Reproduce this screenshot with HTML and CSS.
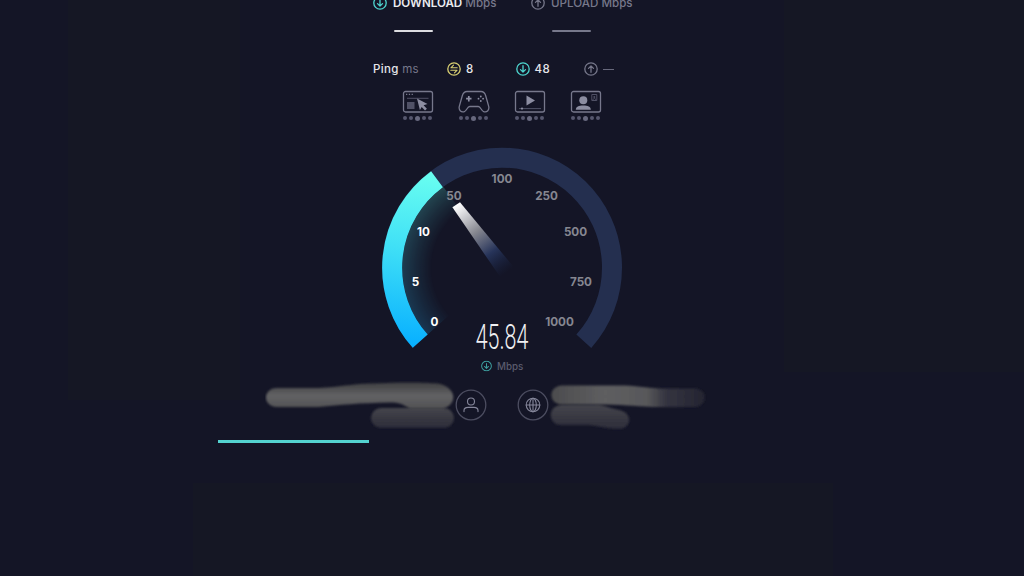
FILE: index.html
```html
<!DOCTYPE html>
<html lang="en">
<head>
    <meta charset="UTF-8">
    <meta name="viewport" content="width=device-width, initial-scale=1.0">
    <title>Speed Test</title>
    <link rel="stylesheet" href="styles.css">
</head>
<body>
    <!-- Shared icons -->
    <svg class="icon-defs" width="0" height="0">
        <symbol id="icon-down" viewBox="0 0 14 14">
            <circle cx="7" cy="7" r="6.2"/>
            <path d="M7 3.7v6.3M4.5 7.6L7 10.1l2.5-2.5"/>
        </symbol>
        <symbol id="icon-up" viewBox="0 0 14 14">
            <circle cx="7" cy="7" r="6.2"/>
            <path d="M7 10.3V4M4.5 6.4L7 3.9l2.5 2.5"/>
        </symbol>
        <symbol id="icon-idle" viewBox="0 0 14 14">
            <circle cx="7" cy="7" r="6.2"/>
            <path stroke-width="1.1" d="M10.2 5.8H3.9L6.5 3.2M3.8 8.2h6.3L7.5 10.800"/>
        </symbol>
    </svg>

    <div class="page">
        <div class="side side-left"></div>

        <main class="test">
            <div class="results">
                <div class="result">
                    <div class="result-label"><svg class="icon teal"><use href="#icon-down"/></svg><span><b>DOWNLOAD</b> Mbps</span></div>
                    <div class="result-line"></div>
                </div>
                <div class="result upload">
                    <div class="result-label"><svg class="icon"><use href="#icon-up"/></svg><span>UPLOAD Mbps</span></div>
                    <div class="result-line"></div>
                </div>
            </div>

            <div class="ping">
                <span class="ping-title">Ping <em>ms</em></span>
                <span class="ping-item idle"><svg class="icon yellow"><use href="#icon-idle"/></svg>8</span>
                <span class="ping-item down"><svg class="icon teal"><use href="#icon-down"/></svg>48</span>
                <span class="ping-item up"><svg class="icon"><use href="#icon-up"/></svg><i class="dash"></i></span>
            </div>

            <div class="activities">
                <div class="activity">
                    <svg width="32" height="24" viewBox="0 0 32 24">
                        <rect class="frame" x="1.5" y="1.5" width="29" height="20.500" rx="2"/>
                        <path class="dots" d="M4 4.400h1.300M6.800 4.400h1.300M9.600 4.400h1.300"/>
                        <path class="dim-line" d="M5 8.300h21.500"/>
                        <rect class="dim" x="5" y="12" width="7.500" height="7"/>
                        <path class="fill" d="M15 8.500l10.500 5.500-3.900 1.300 3.300 3.400-1.900 1.800-3.300-3.600-1.800 3.100z"/>
                    </svg>
                    <div class="rating"><i></i><i></i><i></i><i></i><i></i></div>
                </div>
                <div class="activity">
                    <svg width="32" height="24" viewBox="0 0 32 24">
                        <path class="frame" d="M9 1.500h14c3 0 4 1.700 4.700 4.200l3 10.600c.9 3.800-1.700 6.200-4.700 5.500-2.700-.6-3.200-5.300-5.700-5.300h-8.600c-2.500 0-3 4.700-5.700 5.300-3 .7-5.600-1.700-4.700-5.500l3-10.600C5 3.200 6 1.500 9 1.500z"/>
                        <path class="plus" d="M10.800 6v5.400M8.100 8.700h5.400"/>
                        <g class="fill">
                            <circle cx="22.800" cy="6.500" r=".9"/><circle cx="22.800" cy="11" r=".9"/>
                            <circle cx="20.500" cy="8.700" r=".9"/><circle cx="25.100" cy="8.700" r=".9"/>
                        </g>
                    </svg>
                    <div class="rating"><i></i><i></i><i></i><i></i><i></i></div>
                </div>
                <div class="activity">
                    <svg width="32" height="24" viewBox="0 0 32 24">
                        <rect class="frame" x="1.500" y="1.500" width="29" height="20.500" rx="2"/>
                        <path class="fill" d="M12.500 5.500v10l8.500-5z"/>
                        <path class="dim-line" d="M5 18.600h22"/>
                        <circle class="fill" cx="8" cy="18.600" r="1.100"/>
                    </svg>
                    <div class="rating"><i></i><i></i><i></i><i></i><i></i></div>
                </div>
                <div class="activity">
                    <svg width="32" height="24" viewBox="0 0 32 24">
                        <rect class="frame" x="1.500" y="1.500" width="29" height="20.500" rx="2"/>
                        <circle class="fill" cx="13.300" cy="10.300" r="4"/>
                        <path class="fill" d="M5.800 19.800c0-3.300 3-4.300 7.500-4.300s7.500 1 7.500 4.300z"/>
                        <path class="dim-line" d="M21.800 4.500h5v6h-5zM23 10c0-2 2.800-2 2.800 0"/>
                        <circle class="dim" cx="24.300" cy="7" r="1"/>
                    </svg>
                    <div class="rating"><i></i><i></i><i></i><i></i><i></i></div>
                </div>
            </div>

            <!-- Speed gauge -->
            <svg class="gauge" width="260" height="234" viewBox="372 144 260 234">
                <defs>
                    <linearGradient id="arc" gradientUnits="userSpaceOnUse" x1="438" y1="172" x2="418" y2="346">
                        <stop offset="0" stop-color="#6afff0"/>
                        <stop offset=".45" stop-color="#40e0f6"/>
                        <stop offset="1" stop-color="#08b0ff"/>
                    </linearGradient>
                    <linearGradient id="glow-color" gradientUnits="userSpaceOnUse" x1="440" y1="187" x2="428" y2="335">
                        <stop offset="0" stop-color="#4ab8b0"/>
                        <stop offset="1" stop-color="#2080b8"/>
                    </linearGradient>
                    <radialGradient id="glow-fade" gradientUnits="userSpaceOnUse" cx="502" cy="268" r="100">
                        <stop offset=".7" stop-color="#fff" stop-opacity="0"/>
                        <stop offset=".86" stop-color="#fff" stop-opacity=".15"/>
                        <stop offset="1" stop-color="#fff" stop-opacity=".3"/>
                    </radialGradient>
                    <mask id="glow-mask" maskUnits="userSpaceOnUse" x="372" y="144" width="260" height="234">
                        <rect x="372" y="144" width="260" height="234" fill="url(#glow-fade)"/>
                    </mask>
                    <linearGradient id="needle" gradientUnits="userSpaceOnUse" x1="456" y1="205" x2="506" y2="273">
                        <stop offset="0" stop-color="#fff"/>
                        <stop offset=".1" stop-color="#e4e4e7"/>
                        <stop offset=".4" stop-color="#85868f"/>
                        <stop offset=".7" stop-color="#27345a"/>
                        <stop offset="1" stop-color="#182444" stop-opacity="0"/>
                    </linearGradient>
                </defs>
                <path class="track" d="M420.200 341.200A110 110 0 1 1 583.800 341.200"/>
                <path fill="url(#glow-color)" mask="url(#glow-mask)" d="M427.600 334.500A100 100 0 0 1 443.500 187L461 211A70 70 0 0 0 450 314.500z"/>
                <path class="value" d="M420.200 341.200A110 110 0 0 1 437 179.200"/>
                <path fill="url(#needle)" d="M452.400 207.300L460 202.300L514.500 268L500.500 277.500z"/>
                <g class="ticks">
                    <text class="on" x="434.500" y="325.500">0</text>
                    <text class="on" x="415.500" y="285.500">5</text>
                    <text class="on" x="423.500" y="235.500">10</text>
                    <text x="454" y="199.700">50</text>
                    <text x="502" y="183">100</text>
                    <text x="546.500" y="199.700">250</text>
                    <text x="575.500" y="235.500">500</text>
                    <text x="581" y="285.700">750</text>
                    <text x="559.500" y="325.500">1000</text>
                </g>
                <text class="speed" transform="translate(502 349.300) scale(.615 1)">45.84</text>
                <svg class="icon teal unit-icon" x="481" y="360.500" width="11" height="11"><use href="#icon-down" width="11" height="11"/></svg>
                <text class="unit" x="497" y="369.700">Mbps</text>
            </svg>

            <!-- Connection details, names smudged out -->
            <div class="connection">
                <svg width="190" height="52" viewBox="265 379 190 52">
                    <defs>
                        <filter id="soft" x="-10%" y="-20%" width="120%" height="140%"><feGaussianBlur stdDeviation="1.2"/></filter>
                        <linearGradient id="smudge" x2="0" y2="1">
                            <stop offset="0" stop-color="#3e3e41"/>
                            <stop offset=".5" stop-color="#626264"/>
                            <stop offset="1" stop-color="#525254"/>
                        </linearGradient>
                        <linearGradient id="smudge-dim" x2="0" y2="1">
                            <stop offset="0" stop-color="#45454b"/>
                            <stop offset="1" stop-color="#2c2c39"/>
                        </linearGradient>
                    </defs>
                    <rect fill="url(#smudge-dim)" filter="url(#soft)" x="371" y="408" width="83" height="20" rx="10"/>
                    <path fill="url(#smudge)" filter="url(#soft)" d="M276 388H318C340 387 350 384 370 383.500C400 382 425 382 438 383.500C457 387 458 405 443 408.500H410C402 404 399 402.500 390 402.500C360 403 340 405 318 407H277C262 406 263 389 276 388z"/>
                </svg>
                <svg class="round" width="32" height="32" viewBox="0 0 32 32">
                    <circle class="ring" cx="16" cy="16" r="14.800"/>
                    <circle cx="16" cy="12.500" r="3.500"/>
                    <path d="M9 22.600v-1c0-2.200 2-3.200 4-3.200h6c2 0 4 1 4 3.200v1"/>
                </svg>
                <svg class="round globe" width="32" height="32" viewBox="0 0 32 32">
                    <circle class="ring" cx="16" cy="16" r="14.800"/>
                    <circle cx="16" cy="16" r="6.800"/>
                    <ellipse cx="16" cy="16" rx="3.300" ry="6.800"/>
                    <path d="M9.200 16h13.600M16 9.200v13.600"/>
                </svg>
                <svg width="158" height="52" viewBox="549 379 158 52">
                    <defs>
                        <linearGradient id="fade">
                            <stop offset="0" stop-color="#4c4c4e"/>
                            <stop offset=".35" stop-color="#5e5e60"/>
                            <stop offset=".62" stop-color="#58585a"/>
                            <stop offset=".75" stop-color="#343440"/>
                            <stop offset="1" stop-color="#242431"/>
                        </linearGradient>
                    </defs>
                    <path fill="url(#smudge-dim)" filter="url(#soft)" d="M561 405H600C610 407 613 409 619 410C634 413 631 429 619 429C608 429 600 426 588 425H561C548 425 547 406 561 405z"/>
                    <path fill="url(#fade)" filter="url(#soft)" d="M562 385.500H625C640 386 650 388.500 665 388.500H695C708 389 708 406 695 407H652C635 406 620 404.500 600 404.500H562C548 404 548 386 562 385.500z"/>
                </svg>
            </div>

            <div class="progress"></div>
        </main>

        <div class="side side-right"></div>
        <div class="bottom"></div>
    </div>
</body>
</html>
```
FILE: styles.css
```css
* {
    box-sizing: border-box;
    margin: 0;
    padding: 0;
}

body {
    background: #141526;
    color: #e6e6ea;
    font-family: Inter, sans-serif;
    overflow: hidden;
}

.icon-defs {
    display: block;
}

.page {
    display: grid;
    grid-template-columns: 172px 544px 240px;
    grid-template-rows: 483px 93px;
    height: 576px;
    padding-left: 68px;
}

.side {
    background: #151724;
}

.side-left {
    height: 400px;
}

.side-right {
    height: 372px;
}

.bottom {
    background: #151724;
    grid-column: 1 / -1;
    width: 640px;
    margin-left: 125px;
}

.test {
    display: flex;
    flex-direction: column;
    align-items: flex-start;
}

.icon {
    width: 14px;
    height: 14px;
    flex: none;
    fill: none;
    stroke: #76778a;
    stroke-width: 1.3;
    stroke-linecap: round;
    stroke-linejoin: round;
}

.icon.teal {
    stroke: #4ed6d0;
}

.icon.yellow {
    stroke: #d8cf72;
}

.results {
    display: flex;
    gap: 33px;
    margin: -5px 0 0 133px;
    height: 37px;
}

.result {
    width: 125px;
    color: #77788b;
    font-size: 11.6px;
    font-weight: 500;
    white-space: nowrap;
}

.result-label {
    display: flex;
    align-items: center;
    gap: 6px;
    height: 15px;
}

.result b {
    color: #ececf0;
    font-weight: 600;
}

.result-line {
    width: 39px;
    height: 2px;
    margin: 20px 0 0 21px;
    border-radius: 1px;
    background: #dcdce0;
}

.upload .result-line {
    background: #77788b;
}

.ping {
    display: flex;
    align-items: center;
    height: 16px;
    margin: 29px 0 0 133px;
    font-size: 11.5px;
    font-weight: 500;
}

.ping-title {
    width: 74px;
    letter-spacing: .35px;
}

.ping em {
    color: #77788b;
    font-style: normal;
    font-weight: 400;
}

.ping-item {
    display: flex;
    align-items: center;
    gap: 5px;
    width: 68.5px;
    letter-spacing: .4px;
}

.dash {
    width: 11px;
    height: 1px;
    background: #68697c;
}

.activities {
    display: flex;
    gap: 24px;
    margin: 13px 0 0 162px;
}

.activity {
    width: 32px;
}

.activity svg {
    display: block;
}

.frame {
    fill: none;
    stroke: #77788c;
    stroke-width: 1.3;
}

.fill {
    fill: #8c8da1;
}

.dim {
    fill: #505166;
}

.dim-line {
    fill: none;
    stroke: #505166;
}

.dots {
    stroke: #77788c;
    stroke-width: 1.3;
}

.plus {
    stroke: #8c8da1;
    stroke-width: 1.7;
}

.rating {
    display: flex;
    align-items: center;
    justify-content: center;
    gap: 2px;
    width: 31px;
    height: 8px;
}

.rating i {
    width: 4px;
    height: 4px;
    border-radius: 50%;
    background: #56576e;
}

.rating i:nth-child(3) {
    width: 5px;
    height: 5px;
    background: #67687e;
}

.gauge {
    margin: 22px 0 0 132px;
}

.track,
.value {
    fill: none;
    stroke: #242f4f;
    stroke-width: 20;
}

.value {
    stroke: url(#arc);
}

.ticks {
    fill: #868791;
    font-size: 11.7px;
    font-weight: 700;
    text-anchor: middle;
}

.ticks .on {
    fill: #fff;
}

.speed {
    fill: #f0f0f3;
    font-family: Roboto, sans-serif;
    font-size: 34.8px;
    font-weight: 300;
    text-anchor: middle;
}

.unit {
    fill: #5b5c6e;
    font-size: 9.8px;
    font-weight: 500;
}

.unit-icon {
    width: 11px;
    height: 11px;
    opacity: .7;
}

.connection {
    display: flex;
    align-items: center;
    margin: 1px 0 0 25px;
}

.round {
    fill: none;
    stroke: #85869a;
    stroke-width: 1.1;
    stroke-linecap: round;
}

.round .ring {
    stroke: #4c4d60;
    stroke-width: 1.3;
}

.globe {
    margin: 0 0 0 30px;
}

.progress {
    width: 151px;
    height: 3px;
    margin: 9px 0 0 -22px;
    background: #54d3d0;
}
```
